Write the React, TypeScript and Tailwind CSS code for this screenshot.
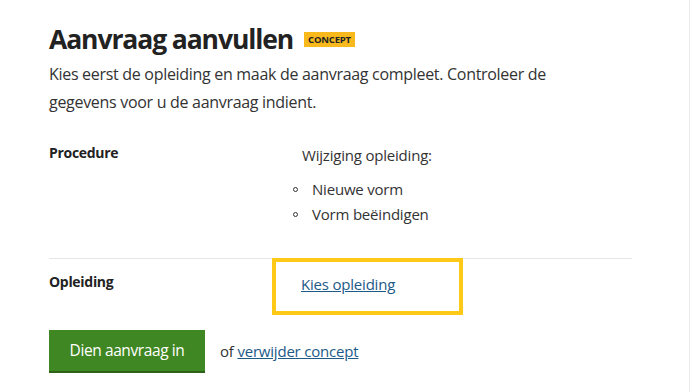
import React from "react";

export default function App() {
  return (
    <div className="w-[690px] h-[392px] bg-white overflow-hidden" style={{ fontFamily: '"Open Sans", "Noto Sans", sans-serif' }}>
      <div className="w-[690px] h-[392px] border-r border-[#ececec] pl-[49px] pr-[57px]">
        <div className="flex items-center pt-[21px] h-[58px]">
          <h1 className="text-[26.5px] font-bold text-[#222] tracking-[-1.1px] leading-none">Aanvraag aanvullen</h1>
          <span className="ml-[11px] bg-[#f9b91c] text-[#222] text-[9.5px] font-bold px-[4px] h-[15px] flex items-center leading-none tracking-[-0.2px]">CONCEPT</span>
        </div>
        <p className="w-[530px] mt-[2px] text-[16px] leading-[28px] text-[#333] tracking-[-0.3px]">
          Kies eerst de opleiding en maak de aanvraag compleet. Controleer de gegevens voor u de aanvraag indient.
        </p>
        <div className="mt-[25px] flex border-b border-[#e6e6e6] pb-[31px]">
          <div className="w-[223px] text-[14px] font-bold text-[#222] leading-[24px] tracking-[-0.3px]">Procedure</div>
          <div className="pl-[30px] text-[15px] text-[#333] leading-[25px] tracking-[-0.2px] pt-[2px]">
            <div>Wijziging opleiding:</div>
            <ul className="mt-[9px] -ml-[9px]">
              <li className="flex items-center"><span className="w-[5px] h-[5px] rounded-full border border-[#333] mr-[14px]"></span>Nieuwe vorm</li>
              <li className="flex items-center"><span className="w-[5px] h-[5px] rounded-full border border-[#333] mr-[14px]"></span>Vorm beëindigen</li>
            </ul>
          </div>
        </div>
        <div className="flex">
          <div className="w-[223px] pt-[11px] text-[14px] font-bold text-[#222] leading-[24px] tracking-[-0.3px]">Opleiding</div>
          <div className="w-[191px] h-[57px] -mt-px border-[4px] border-[#ffc917] pl-[25px] pt-[10px]">
            <a href="#" className="text-[15px] text-[#1d5a88] underline leading-[24px] tracking-[-0.2px]">Kies opleiding</a>
          </div>
        </div>
        <div className="mt-[15px] flex items-center">
          <button className="w-[156px] h-[43px] bg-[#3f8722] border-b-[2px] border-[#2d6318] text-white text-[15.5px] tracking-[-0.4px]">Dien aanvraag in</button>
          <span className="ml-[15px] text-[15px] text-[#333] tracking-[-0.2px]">of <a href="#" className="text-[#1d5a88] underline">verwijder concept</a></span>
        </div>
      </div>
    </div>
  );
}
